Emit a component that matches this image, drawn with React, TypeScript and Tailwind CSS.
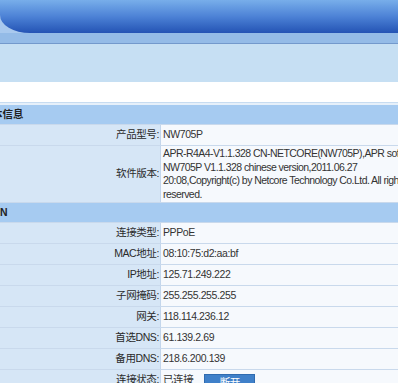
const font = { fontFamily: '"Liberation Sans", "Noto Sans CJK SC", sans-serif' };

const wanRows = [
  { label: "连接类型", value: "PPPoE" },
  { label: "MAC地址", value: "08:10:75:d2:aa:bf" },
  { label: "IP地址", value: "125.71.249.222" },
  { label: "子网掩码", value: "255.255.255.255" },
  { label: "网关", value: "118.114.236.12" },
  { label: "首选DNS", value: "61.139.2.69" },
  { label: "备用DNS", value: "218.6.200.139" },
];

const Row = ({ label, children }: { label: string; children: React.ReactNode }) => (
  <div className="flex h-[21px] border-b border-[#c9d9ec]">
    <div className="w-[161px] shrink-0 bg-[#d6e6f6] border-r border-[#c3d6ec] flex items-center justify-end pr-[1px] text-[10.5px] tracking-[-0.4px] text-[#2a2a2a]">
      {label}:
    </div>
    <div className="flex-1 bg-[#f6f9fd] pl-[2px] flex items-center text-[10.5px] tracking-[-0.4px] text-[#333] whitespace-nowrap overflow-hidden">
      {children}
    </div>
  </div>
);

const Section = ({ title, shift }: { title: string; shift?: boolean }) => (
  <div className="h-[20px] bg-[#a6cbf1] border-b border-[#c9d9ec] flex items-center text-[10.5px] font-bold text-[#222] overflow-hidden">
    <span className={shift ? "ml-[-8px]" : ""}>{title}</span>
  </div>
);

export default function App() {
  return (
    <div className="w-[398px] h-[383px] overflow-hidden bg-white" style={font}>
      <div className="bg-[#a9c9ee]">
        <div className="h-[33px] rounded-bl-[30px_18px] bg-gradient-to-b from-[#78aeea] via-[#4d82d6] to-[#2453b4]" />
      </div>
      <div className="h-[11px] bg-[#94bbe7] border-b border-[#7399cc]" />
      <div className="h-[38px] bg-[#c6dff3]" />
      <div className="h-[21px] bg-white border-b border-[#c7dcf1]" />
      <div className="h-[2px] bg-[#e6f0fa]" />
      <Section title="本信息" shift />
      <Row label="产品型号">NW705P</Row>
      <div className="flex border-b border-[#c9d9ec]">
        <div className="w-[161px] shrink-0 bg-[#d6e6f6] border-r border-[#c3d6ec] flex items-center justify-end pr-[1px] text-[10.5px] tracking-[-0.4px] text-[#2a2a2a]">
          软件版本:
        </div>
        <div className="flex-1 bg-[#f6f9fd] pl-[2px] py-[1px] text-[10.5px] tracking-[-0.55px] leading-[13.5px] text-[#333] whitespace-nowrap overflow-hidden">
          <div>APR-R4A4-V1.1.328 CN-NETCORE(NW705P),APR software</div>
          <div>NW705P V1.1.328 chinese version,2011.06.27</div>
          <div>20:08,Copyright(c) by Netcore Technology Co.Ltd. All rights</div>
          <div>reserved.</div>
        </div>
      </div>
      <Section title="N" />
      {wanRows.map((r) => (
        <Row key={r.label} label={r.label}>
          {r.value}
        </Row>
      ))}
      <Row label="连接状态">
        <span>已连接</span>
        <button className="ml-[11px] mt-[5px] h-[18px] w-[51px] shrink-0 bg-[#3f80c9] text-white text-[10.5px] border border-[#2f6bb0]">
          断开
        </button>
      </Row>
    </div>
  );
}
